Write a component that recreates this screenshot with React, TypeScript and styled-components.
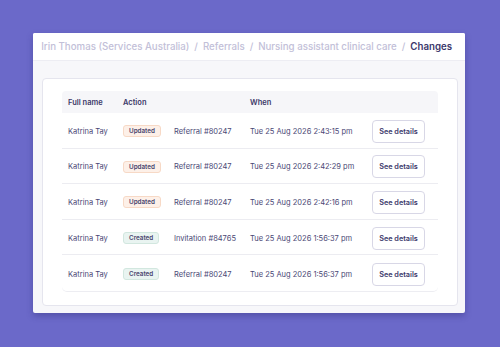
import React from 'react';
import styled, { createGlobalStyle } from 'styled-components';

type Change = {
  name: string;
  action: 'Updated' | 'Created';
  target: string;
  when: string;
};

const CHANGES: Array<Change> = [
  { name: 'Katrina Tay', action: 'Updated', target: 'Referral #80247', when: 'Tue 25 Aug 2026 2:43:15 pm' },
  { name: 'Katrina Tay', action: 'Updated', target: 'Referral #80247', when: 'Tue 25 Aug 2026 2:42:29 pm' },
  { name: 'Katrina Tay', action: 'Updated', target: 'Referral #80247', when: 'Tue 25 Aug 2026 2:42:16 pm' },
  { name: 'Katrina Tay', action: 'Created', target: 'Invitation #84765', when: 'Tue 25 Aug 2026 1:56:37 pm' },
  { name: 'Katrina Tay', action: 'Created', target: 'Referral #80247', when: 'Tue 25 Aug 2026 1:56:37 pm' },
];

const CRUMBS = ['Irin Thomas (Services Australia)', 'Referrals', 'Nursing assistant clinical care'];

function App() {
  return (
    <>
      <GlobalStyle />
      <Page>
        <Window>
          <Header>
            <Breadcrumbs>
              {CRUMBS.map((crumb) => (
                <React.Fragment key={crumb}>
                  <Crumb>{crumb}</Crumb>
                  <Slash>/</Slash>
                </React.Fragment>
              ))}
              <Crumb current>Changes</Crumb>
            </Breadcrumbs>
          </Header>
          <Body>
            <Card>
              <Table>
                <HeadRow>
                  <HeadCell>Full name</HeadCell>
                  <HeadCell>Action</HeadCell>
                  <HeadCell />
                  <HeadCell>When</HeadCell>
                  <HeadCell />
                </HeadRow>
                {CHANGES.map((change, index) => (
                  <Row key={index} last={index === CHANGES.length - 1}>
                    <Cell>{change.name}</Cell>
                    <Cell>
                      <Badge kind={change.action}>{change.action}</Badge>
                    </Cell>
                    <Cell>{change.target}</Cell>
                    <Cell>{change.when}</Cell>
                    <Cell>
                      <DetailsButton>See details</DetailsButton>
                    </Cell>
                  </Row>
                ))}
              </Table>
            </Card>
          </Body>
        </Window>
      </Page>
    </>
  );
}

const GlobalStyle = createGlobalStyle`
  html, body {
    margin: 0;
    padding: 0;
    background: #6b69c9;
  }
  body {
    font-family: Inter, "Noto Sans", sans-serif;
    color: #3d3a6b;
  }
`;

const Page = styled.div`
  width: 500px;
  height: 347px;
  padding: 33px 35px 0 33px;
  box-sizing: border-box;
  background: #6b69c9;
`;

const Window = styled.div`
  width: 432px;
  height: 280px;
  display: flex;
  flex-direction: column;
  background: #f7f7fa;
  border-radius: 2px;
  overflow: hidden;
  box-shadow: 0 3px 6px rgba(40, 36, 110, 0.35);
`;

const Header = styled.div`
  height: 27px;
  flex-shrink: 0;
  display: flex;
  align-items: center;
  justify-content: flex-end;
  padding-right: 13px;
  background: #ffffff;
  border-bottom: 1px solid #ededf3;
  overflow: hidden;
`;

const Breadcrumbs = styled.div`
  display: flex;
  align-items: center;
  gap: 5px;
  white-space: nowrap;
  font-size: 9.7px;
  font-weight: 500;
`;

const Crumb = styled.span<{ current?: boolean }>`
  color: ${(p) => (p.current ? '#3b386b' : '#c2c0d8')};
  font-weight: ${(p) => (p.current ? 600 : 500)};
`;

const Slash = styled.span`
  color: #c2c0d8;
`;

const Body = styled.div`
  flex: 1;
  padding: 17px 7px 8px 9px;
  display: flex;
`;

const Card = styled.div`
  flex: 1;
  background: #ffffff;
  border: 1px solid #e5e5ee;
  border-radius: 4px;
  padding: 12px 19px 13px 19px;
`;

const Table = styled.div`
  display: flex;
  flex-direction: column;
  border-radius: 5px;
  border-bottom: 1px solid #ededf2;
`;

const columns = '55px 51px 76px 122px 1fr';

const HeadRow = styled.div`
  display: grid;
  grid-template-columns: ${columns};
  height: 22px;
  align-items: center;
  background: #f6f6f9;
  border-radius: 4px 4px 0 0;
`;

const HeadCell = styled.div`
  padding-left: 6px;
  font-size: 7.5px;
  font-weight: 600;
  color: #3b3868;
`;

const Row = styled.div<{ last?: boolean }>`
  display: grid;
  grid-template-columns: ${columns};
  height: 35.6px;
  box-sizing: border-box;
  align-items: center;
  padding-top: 2px;
  border-bottom: ${(p) => (p.last ? 'none' : '1px solid #ececf1')};
`;

const Cell = styled.div`
  padding-left: 6px;
  font-size: 7.5px;
  color: #4a4775;
  white-space: nowrap;
`;

const Badge = styled.span<{ kind: 'Updated' | 'Created' }>`
  display: inline-flex;
  align-items: center;
  justify-content: center;
  height: 12px;
  padding: 0 5px;
  border-radius: 3px;
  font-size: 6.3px;
  font-weight: 600;
  color: #4a466f;
  background: ${(p) => (p.kind === 'Updated' ? '#fdf0e8' : '#e9f4f1')};
  border: 1px solid ${(p) => (p.kind === 'Updated' ? '#f7d9c6' : '#d2e7df')};
  box-sizing: border-box;
`;

const DetailsButton = styled.button`
  width: 53px;
  height: 23px;
  padding: 0;
  background: #ffffff;
  border: 1px solid #d8d7e6;
  border-radius: 4px;
  font-family: inherit;
  font-size: 7.3px;
  font-weight: 600;
  color: #3d3a6b;
  cursor: pointer;
`;

export default App;
